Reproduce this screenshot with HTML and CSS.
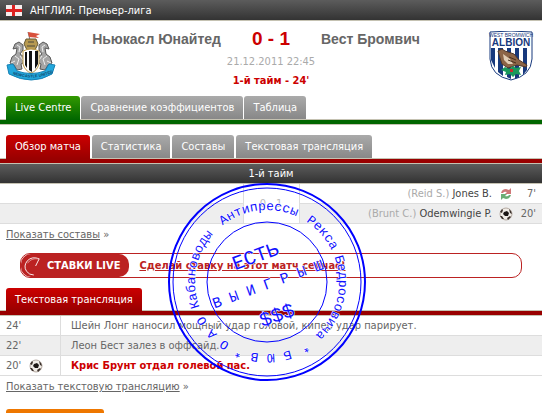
FILE: index.html
```html
<!DOCTYPE html>
<html lang="ru">
<head>
  <meta charset="UTF-8">
  <meta name="viewport" content="width=device-width, initial-scale=1.0">
  <title>Ньюкасл Юнайтед 0 - 1 Вест Бромвич</title>
  <link rel="stylesheet" href="styles.css">
</head>
<body>

  <svg width="0" height="0" class="defs" aria-hidden="true">
    <symbol id="ball" viewBox="0 0 14 14">
      <circle cx="7" cy="7" r="6" fill="#f1ece6" stroke="#b5aaa2"/>
      <path d="M5 5l3-1 2 2-1 3-3 0-2-2z" fill="#1c1614"/>
      <path d="M1 5l2-3 1 1-1 3zM10 2l2 2 1 3-2-1zM1 9l2 0 2 3-2 0zM8 11l3-2 1 1-3 3z" fill="#3b302b"/>
    </symbol>
  </svg>

  <header class="league">
    <svg class="flag" viewBox="0 0 16 11" role="img" aria-label="Англия">
      <rect width="16" height="11" fill="#f6eeee"/>
      <path d="M6 0h3v11h-3zM0 4h16v3h-16z" fill="#d22"/>
    </svg>
    <span>АНГЛИЯ: Премьер-лига</span>
  </header>

  <section class="match">
    <svg class="crest" viewBox="0 0 50 50" role="img" aria-label="Ньюкасл Юнайтед">
      <path d="M22 1l2 8" stroke="#777" fill="none"/>
      <path d="M22 1l12 2-4 2 3 2-10-1z" fill="#d8513c"/>
      <path d="M20 8h10l2 5-3 6h-8l-3-6z" fill="#b79a51" stroke="#655934"/>
      <path d="M22 11h6M21 15h8" stroke="#4b493c"/>
      <g id="horse">
        <path d="M9 13l4-2 4 3 0 5-3 4 4 3 1 5-4 2 1 5-5 1-3-5-4-2 2-6 4-3 1-6-4 1z" fill="#a5a5a5" stroke="#585858"/>
        <path d="M11 14l3 2-1 5M9 25l4 3-2 6M5 32l4-2M14 25l3 4" stroke="#ededed" fill="none"/>
      </g>
      <use href="#horse" transform="matrix(-1 0 0 1 50 0)"/>
      <path d="M17 20q8-4 16 0v13q-2 7-8 9-6-2-8-9z" fill="#fff" stroke="#b99745"/>
      <path d="M19 21h2v16l-2-3zM23 20h3v21l-3-2zM29 20h3v13l-3 5z" fill="#111"/>
      <path d="M1 34l6-1 4 7q14 5 28 0l4-7 6 1-3 9q-20 12-43 0z" fill="#22a7dc" stroke="#1681b4"/>
      <path id="motto" d="M4 42q21 9 42 0" fill="none"/>
      <text class="motto"><textPath href="#motto" startOffset="3">NEWCASTLE UNITED</textPath></text>
    </svg>
    <h2 class="home">Ньюкасл Юнайтед</h2>
    <div class="result">
      <strong class="score">0 - 1</strong>
      <time datetime="2011-12-21T22:45">21.12.2011 22:45</time>
      <span class="minute">1-й тайм - 24'</span>
    </div>
    <h2 class="away">Вест Бромвич</h2>
    <svg class="crest" viewBox="0 0 50 50" role="img" aria-label="Вест Бромвич">
      <path d="M4 1q21-2 42 0v27q-1 17-21 21-20-4-21-21z" fill="#fff" stroke="#17397d"/>
      <path d="M5 17h4v20l-4-8zM12 17h5v28l-5-4zM21 17h4v31l-4-2zM29 17h4v29l-4 2zM37 17h4v22l-4 5z" fill="#17397d"/>
      <text class="crest-small" x="25" y="6">WEST BROMWICH</text>
      <text class="crest-name" x="25" y="15">ALBION</text>
      <path d="M12 20l4-2 3 2 9 3 5 6 8 5-1 2-9-2-9 3-6-4-2-6z" fill="#8c6547" stroke="#50382a"/>
      <path d="M17 23l1 6 4 4 5 0-3-5z" fill="#e1cdb5"/>
      <path d="M23 26l7 3M22 29l8 3" stroke="#47301f"/>
      <path d="M15 39l4-3 4 2 4-3 3 2 5-1-2 4 2 4-5-1-3 3-3-3-5 1 1-3z" fill="#18985b"/>
      <path d="M24 38h3v3h-3z" fill="#c72b2b"/>
    </svg>
  </section>

  <nav class="tabs green">
    <a class="active" href="#live">Live Centre</a>
    <a href="#odds">Сравнение коэффициентов</a>
    <a href="#standings">Таблица</a>
  </nav>

  <nav class="tabs red">
    <a class="active" href="#summary">Обзор матча</a>
    <a href="#stats">Статистика</a>
    <a href="#lineups">Составы</a>
    <a href="#commentary">Текстовая трансляция</a>
  </nav>

  <table class="summary">
    <colgroup>
      <col>
      <col class="half-col">
      <col>
    </colgroup>
    <thead>
      <tr><th colspan="3">1-й тайм</th></tr>
    </thead>
    <tbody>
      <tr>
        <td></td>
        <td class="half-score" rowspan="2">0 - 1</td>
        <td>
          <div class="event">
            <span><i>(Reid S.)</i> Jones B.</span>
            <svg class="icon" viewBox="0 0 14 14" role="img" aria-label="Замена">
              <path d="M2 6q1-4 5-4l3 1 2-2v6h-6l2-2q-3-1-4 1z" fill="#cf7777"/>
              <path d="M12 8q-1 4-5 4l-3-1-2 2v-6h6l-2 2q3 1 4-1z" fill="#6cac74"/>
            </svg>
            <span class="time">7'</span>
          </div>
        </td>
      </tr>
      <tr class="even">
        <td></td>
        <td>
          <div class="event">
            <span><i>(Brunt C.)</i> Odemwingie P.</span>
            <svg class="icon" role="img" aria-label="Гол"><use href="#ball"/></svg>
            <span class="time">20'</span>
          </div>
        </td>
      </tr>
    </tbody>
  </table>
  <p class="more"><a href="#lineups">Показать составы</a> »</p>

  <div class="bet">
    <div class="bet-label">
      <svg viewBox="0 0 20 22" aria-hidden="true">
        <path d="M14 11l4-8q-8-3-13 2-5 6-1 12 3 4 8 4" fill="none" stroke="#fff"/>
        <path d="M17 3q-8-1-12 5" fill="none" stroke="#e79a9a"/>
      </svg>
      <span>СТАВКИ LIVE</span>
    </div>
    <a href="#bet">Сделай ставку на этот матч сейчас!</a>
  </div>

  <nav class="tabs red">
    <a class="active" href="#commentary">Текстовая трансляция</a>
  </nav>
  <table class="comments">
    <tr>
      <td class="when">24'</td>
      <td>Шейн Лонг наносил мощный удар головой, кипер удар парирует.</td>
    </tr>
    <tr class="even">
      <td class="when">22'</td>
      <td>Леон Бест залез в оффсайд.</td>
    </tr>
    <tr>
      <td class="when"><div>20' <svg class="icon" role="img" aria-label="Гол"><use href="#ball"/></svg></div></td>
      <td class="goal">Крис Брунт отдал голевой пас.</td>
    </tr>
  </table>
  <p class="more"><a href="#commentary">Показать текстовую трансляцию</a> »</p>

  <div class="next-tab"></div>

  <svg class="stamp" viewBox="0 0 200 200">
    <path id="ring" d="M100 172a72 72 0 0 1 0-144a72 72 0 0 1 0 144a72 72 0 0 1 0-144" fill="none"/>
    <circle cx="100" cy="100" r="98" stroke-width="2"/>
    <circle cx="100" cy="100" r="94"/>
    <circle cx="100" cy="100" r="60"/>
    <g class="ring-text">
      <text><textPath href="#ring" startOffset="39">О А О</textPath></text>
      <text><textPath href="#ring" startOffset="87">Кабановоды</textPath></text>
      <text><textPath href="#ring" startOffset="178">Антипрессы</textPath></text>
      <text><textPath href="#ring" startOffset="267">Рекса</textPath></text>
      <text><textPath href="#ring" startOffset="313">Бедросовича</textPath></text>
      <text><textPath href="#ring" startOffset="410">*</textPath></text>
      <text><textPath href="#ring" startOffset="428">Б</textPath></text>
      <text><textPath href="#ring" startOffset="444">Ю В *</textPath></text>
    </g>
    <g class="center-text" transform="rotate(-20 100 100)">
      <text class="big" x="98" y="78">ЕСТЬ</text>
      <text class="mid" x="100" y="107">В Ы И Г Р Ы Ш</text>
      <text class="big" x="98" y="141">$$$</text>
    </g>
  </svg>

</body>
</html>
```
FILE: styles.css
```css
body {
  position: relative;
  margin: 0;
  background: #fff;
  color: #666;
  font: 11px/19px "DejaVu Sans Condensed", "DejaVu Sans", sans-serif;
  overflow: hidden;
}

a {
  color: inherit;
}

.defs {
  position: absolute;
}

.league {
  display: flex;
  align-items: center;
  gap: 8px;
  height: 20px;
  padding: 0 6px;
  border-bottom: 1px solid #c5c2b2;
  background: linear-gradient(#5c5c5c, #333);
  color: #fff;
}

.flag {
  width: 16px;
  height: 11px;
}

.match {
  display: grid;
  grid-template-columns: 50px 1fr 100px 1fr 50px;
  height: 65px;
  padding: 10px 6px 0;
}

.crest {
  width: 50px;
  height: 50px;
}

.match h2 {
  margin: 0;
  font: bold 14px/16px "Liberation Sans", Arial, sans-serif;
}

.home {
  text-align: right;
}

.result {
  display: flex;
  flex-direction: column;
  align-items: center;
}

.score {
  color: #c00;
  font: bold 19px/16px "Liberation Sans", Arial, sans-serif;
}

.result time {
  padding-top: 5px;
  color: #aaa;
}

.minute {
  color: #c00;
  font-weight: bold;
}

.motto {
  fill: #12486b;
  font: bold 4px "Liberation Sans", sans-serif;
}

.crest-small,
.crest-name {
  fill: #17397d;
  font: 5px "Liberation Sans", sans-serif;
  text-anchor: middle;
}

.crest-name {
  font-size: 10px;
  font-weight: bold;
}

.tabs {
  display: flex;
  gap: 1px;
  padding: 0 6px;
  border-bottom: 1px solid #c5c2b2;
}

.tabs a {
  padding: 2px 9px;
  border-radius: 3px 3px 0 0;
  background: linear-gradient(#aaa, #888);
  color: #fff;
  text-decoration: none;
}

.green {
  margin-bottom: 10px;
  padding-bottom: 5px;
  box-shadow: inset 0 -4px #060, inset 0 -5px #c5c2b2;
}

.red {
  gap: 2px;
  padding-bottom: 5px;
  box-shadow: inset 0 -4px #900, inset 0 -5px #c5c2b2;
}

.tabs .active {
  margin-bottom: -1px;
}

.green .active {
  background: linear-gradient(#390, #060);
}

.red .active {
  background: linear-gradient(#c00, #900);
}

table {
  width: 100%;
  border-collapse: collapse;
}

th,
td {
  height: 19px;
  padding: 0;
  border-bottom: 1px solid #ddd;
}

th {
  border-color: #c5c2b2;
  background: linear-gradient(#5c5c5c, #333);
  color: #fff;
  font-weight: normal;
}

.even {
  background: #eee;
}

.summary {
  table-layout: fixed;
}

.half-col {
  width: 56px;
}

.half-score {
  border: 1px solid #ddd;
  background: #fff;
  color: #bbb;
  text-align: center;
}

.event {
  display: flex;
  justify-content: flex-end;
  align-items: center;
  gap: 7px;
  padding-right: 6px;
  color: #444;
}

.event i {
  color: #aaa;
  font-style: normal;
}

.icon {
  width: 14px;
  height: 14px;
}

.time {
  width: 16px;
  color: #666;
  text-align: right;
}

.more {
  margin: 0;
  padding: 1px 6px 9px;
}

.bet {
  display: flex;
  align-items: center;
  gap: 10px;
  height: 23px;
  margin: 0 20px 10px;
  border: 1px solid #b22;
  border-radius: 10px;
  color: #b22;
  font-weight: bold;
}

.bet-label {
  display: flex;
  align-items: center;
  gap: 6px;
  height: 23px;
  padding: 0 9px 0 2px;
  border-radius: 10px;
  background: #b22;
  color: #fff;
}

.bet-label svg {
  width: 18px;
  height: 20px;
}

.comments td {
  padding-left: 10px;
}

.comments .when {
  width: 54px;
  padding-left: 6px;
  border-right: 1px solid #ddd;
}

.when div {
  display: flex;
  align-items: center;
  gap: 8px;
}

.comments .goal {
  color: #c00;
  font-weight: bold;
}

.next-tab {
  width: 98px;
  height: 6px;
  margin: 4px 6px 0;
  border-radius: 3px 3px 0 0;
  background: #e70;
}

/* round stamp laid over the page */
.stamp {
  position: absolute;
  top: 182px;
  left: 167px;
  width: 200px;
  height: 200px;
  pointer-events: none;
}

.stamp circle {
  fill: none;
  stroke: #00f;
}

.stamp text {
  fill: #11f;
  stroke: #fff;
  stroke-width: 1px;
  paint-order: stroke;
  font-family: "Liberation Mono", "Courier New", monospace;
}

.ring-text {
  font-size: 13px;
}

.center-text {
  text-anchor: middle;
}

.stamp .big {
  font-size: 20px;
}

.stamp .mid {
  font-size: 15px;
}
```
